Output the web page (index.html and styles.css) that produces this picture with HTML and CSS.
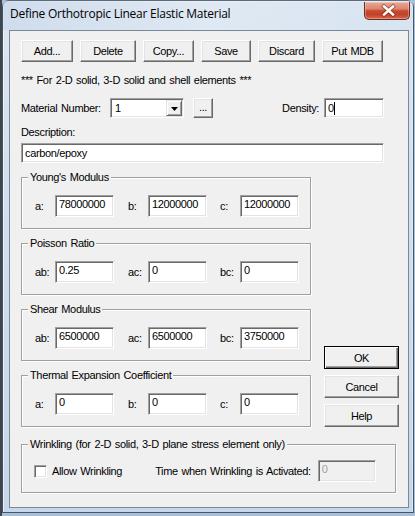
FILE: index.html
```html
<!DOCTYPE html>
<html>
<head>
<meta charset="utf-8">
<title>Define Orthotropic Linear Elastic Material</title>
<link rel="stylesheet" href="styles.css">
</head>
<body>
<div class="window">
  <div class="titlebar">
    <span class="title">Define Orthotropic Linear Elastic Material</span>
    <button class="close" aria-label="Close">
      <svg width="46" height="18" viewBox="0 0 46 18">
        <path d="M19 4.5 L28 12.5 M28 4.5 L19 12.5" stroke="#6a2518" stroke-width="4.2" stroke-linecap="square" opacity="0.55" fill="none"/>
        <path d="M19 4.5 L28 12.5 M28 4.5 L19 12.5" stroke="#ffffff" stroke-width="2.4" stroke-linecap="square" fill="none"/>
      </svg>
    </button>
  </div>
  <div class="client">
    <div class="top">
      <div class="toolbar">
        <button class="btn">Add...</button>
        <button class="btn">Delete</button>
        <button class="btn">Copy...</button>
        <button class="btn">Save</button>
        <button class="btn">Discard</button>
        <button class="btn">Put MDB</button>
      </div>
      <div class="note">*** For 2-D solid, 3-D solid and shell elements ***</div>
      <div class="matrow">
        <span class="mat-label">Material Number:</span>
        <div class="combo">
          <span class="combo-val">1</span>
          <span class="combo-btn">
            <svg width="7" height="4" viewBox="0 0 7 4"><path d="M0 0 H7 L3.5 4 Z" fill="#000"/></svg>
          </span>
        </div>
        <button class="btn dots">...</button>
        <span class="density-label">Density:</span>
        <div class="edit density">0<span class="caret"></span></div>
      </div>
      <div class="desc-label">Description:</div>
      <div class="edit desc">carbon/epoxy</div>
    </div>

    <div class="main">
      <div class="groups">
        <fieldset class="group">
          <legend>Young's Modulus</legend>
          <div class="fields">
            <div class="field"><span class="flabel">a:</span><div class="edit num">78000000</div></div>
            <div class="field"><span class="flabel">b:</span><div class="edit num">12000000</div></div>
            <div class="field"><span class="flabel">c:</span><div class="edit num">12000000</div></div>
          </div>
        </fieldset>
        <fieldset class="group">
          <legend>Poisson Ratio</legend>
          <div class="fields">
            <div class="field"><span class="flabel">ab:</span><div class="edit num">0.25</div></div>
            <div class="field"><span class="flabel">ac:</span><div class="edit num">0</div></div>
            <div class="field"><span class="flabel">bc:</span><div class="edit num">0</div></div>
          </div>
        </fieldset>
        <fieldset class="group">
          <legend>Shear Modulus</legend>
          <div class="fields">
            <div class="field"><span class="flabel">ab:</span><div class="edit num">6500000</div></div>
            <div class="field"><span class="flabel">ac:</span><div class="edit num">6500000</div></div>
            <div class="field"><span class="flabel">bc:</span><div class="edit num">3750000</div></div>
          </div>
        </fieldset>
        <fieldset class="group">
          <legend>Thermal Expansion Coefficient</legend>
          <div class="fields">
            <div class="field"><span class="flabel">a:</span><div class="edit num">0</div></div>
            <div class="field"><span class="flabel">b:</span><div class="edit num">0</div></div>
            <div class="field"><span class="flabel">c:</span><div class="edit num">0</div></div>
          </div>
        </fieldset>
      </div>
      <div class="side">
        <button class="btn side-btn default">OK</button>
        <button class="btn side-btn">Cancel</button>
        <button class="btn side-btn">Help</button>
      </div>
    </div>

    <fieldset class="group wrink">
      <legend>Wrinkling (for 2-D solid, 3-D plane stress element only)</legend>
      <div class="wrow">
        <span class="check"></span>
        <span class="check-label">Allow Wrinkling</span>
        <span class="time-label">Time when Wrinkling is Activated:</span>
        <div class="edit disabled">0</div>
      </div>
    </fieldset>
  </div>
</div>
</body>
</html>
```

FILE: styles.css
```css
* { box-sizing: border-box; }
html, body { margin: 0; padding: 0; }
body {
  width: 415px;
  height: 516px;
  overflow: hidden;
  background: linear-gradient(to right, #3f454c 0, #3f454c 2px, #a9bfd6 2px);
  font-family: "Liberation Sans", Arial, sans-serif;
  font-size: 11px;
  font-weight: normal;
  letter-spacing: -0.35px;
  word-spacing: 1px;
  color: #000;
}
.window {
  margin-left: 2px;
  width: 412px;
  height: 513px;
  border: 1px solid #4a5563;
  border-top-color: #5d6a78;
  border-radius: 7px 7px 0 0;
  background: linear-gradient(180deg, #dbe6f2 0%, #d3e0ee 30%, #c6d7ea 100%);
  box-shadow: inset 1px 1px 0 rgba(255,255,255,0.55), inset -1px 0 0 rgba(255,255,255,0.4);
  display: flex;
  flex-direction: column;
}
.titlebar {
  height: 29px;
  display: flex;
  align-items: flex-start;
  padding-left: 7px;
  background: linear-gradient(90deg, rgba(200,214,232,0.6) 0%, rgba(228,236,245,0.5) 50%, rgba(214,227,241,0.5) 100%);
}
.title {
  font-family: "Open Sans", "Noto Sans", sans-serif;
  font-size: 12px;
  letter-spacing: -0.25px;
  word-spacing: 0;
  line-height: 16px;
  padding-top: 5px;
  color: #000;
}
.close {
  margin-left: auto;
  margin-top: 1px;
  margin-right: 3px;
  width: 46px;
  height: 18px;
  padding: 0;
  border: 1px solid #6e2b20;
  border-top: 0;
  border-radius: 0 0 5px 5px;
  background: linear-gradient(180deg, #e9a895 0%, #dc8670 40%, #c7492f 52%, #c0432b 75%, #d86a4c 100%);
  box-shadow: inset 0 0 0 1px rgba(255,255,255,0.3);
  display: block;
}
.close svg { display: block; }

.client {
  margin: 0 4px 0 6px;
  height: 478px;
  border: 1px solid #7b8899;
  background: #f0f0f0;
  padding: 9px 8px 0 11px;
}
.top { margin-right: 16px; }

.btn {
  font-family: inherit;
  font-size: 11px;
  font-weight: normal;
  letter-spacing: -0.35px;
  word-spacing: 1px;
  color: #000;
  background: #f0f0f0;
  padding: 0;
  border: 1px solid;
  border-color: #fff #696969 #696969 #fff;
  box-shadow: inset -1px -1px 0 #a0a0a0, inset 1px 1px 0 #e3e3e3;
  display: flex;
  align-items: center;
  justify-content: center;
}
.toolbar {
  display: grid;
  grid-template-columns: 52px 56px 51px 50px 57px 61px;
  column-gap: 7px;
  height: 22px;
}
.note {
  margin-top: 12px;
  line-height: 13px;
}
.matrow {
  margin-top: 11px;
  display: flex;
  align-items: center;
  height: 20px;
}
.mat-label { width: 89px; line-height: 13px; }

.edit {
  background: #fff;
  border: 1px solid;
  border-color: #a0a0a0 #fff #fff #a0a0a0;
  box-shadow: inset 1px 1px 0 #696969, inset -1px -1px 0 #e3e3e3;
  line-height: 13px;
  padding: 0 3px;
  white-space: nowrap;
  overflow: hidden;
}
.combo {
  width: 74px;
  height: 20px;
  background: #fff;
  border: 1px solid;
  border-color: #a0a0a0 #fff #fff #a0a0a0;
  box-shadow: inset 1px 1px 0 #696969, inset -1px -1px 0 #e3e3e3;
  display: flex;
  align-items: center;
  padding: 1px 1px 1px 2px;
}
.combo-val { flex: 1; line-height: 13px; padding-left: 2px; }
.combo-btn {
  width: 16px;
  height: 16px;
  background: #f0f0f0;
  border: 1px solid;
  border-color: #e3e3e3 #696969 #696969 #e3e3e3;
  box-shadow: inset 1px 1px 0 #fff, inset -1px -1px 0 #a0a0a0;
  display: flex;
  align-items: center;
  justify-content: center;
}
.combo-btn svg { display: block; margin-top: 1px; }
.dots { width: 20px; height: 20px; margin-left: 9px; padding-bottom: 3px; align-items: center; }
.density-label { margin-left: auto; line-height: 13px; }
.density {
  margin-left: 5px;
  width: 60px;
  height: 20px;
  padding-top: 3px;
  display: flex;
  align-items: flex-start;
}
.caret {
  display: inline-block;
  width: 1px;
  height: 13px;
  background: #000;
}
.desc-label { margin-top: 8px; line-height: 13px; }
.desc { margin-top: 4px; height: 20px; padding-top: 3px; }

.main {
  margin-top: 7px;
  display: flex;
  align-items: flex-end;
  gap: 13px;
}
.groups {
  width: 290px;
  display: flex;
  flex-direction: column;
  gap: 7px;
}
.group {
  margin: 0;
  min-width: 0;
  padding: 11px 0 11px 6px;
  border: 1px solid #a0a0a0;
  box-shadow: 1px 1px 0 #fff, inset 1px 1px 0 #fff;
}
.group legend {
  padding: 0 2px;
  line-height: 14px;
  background: #f0f0f0;
}
.fields {
  display: grid;
  grid-template-columns: 93px 92px auto;
  padding-left: 7px;
}
.field { display: flex; align-items: center; }
.flabel { width: 20px; line-height: 13px; }
.num { width: 59px; height: 22px; padding-top: 2px; }

.side {
  width: 75px;
  display: flex;
  flex-direction: column;
  gap: 6px;
}
.side-btn { width: 75px; height: 23px; }
.side-btn.default {
  border: 1px solid #000;
  box-shadow: inset 1px 1px 0 #fff, inset -1px -1px 0 #696969, inset -2px -2px 0 #a0a0a0;
}

.wrink {
  margin-top: 10px;
  width: 375px;
  padding: 9px 0 10px 6px;
}
.wrow {
  display: flex;
  align-items: center;
  padding-left: 6px;
  height: 22px;
}
.check {
  width: 13px;
  height: 13px;
  background: #fff;
  border: 1px solid;
  border-color: #a0a0a0 #fff #fff #a0a0a0;
  box-shadow: inset 1px 1px 0 #696969, inset -1px -1px 0 #e3e3e3;
}
.check-label { margin-left: 5px; line-height: 13px; }
.time-label { margin-left: 33px; line-height: 13px; }
.disabled {
  margin-left: 7px;
  width: 58px;
  height: 22px;
  padding-top: 2px;
  background: #f0f0f0;
  color: #a0a0a0;
}
```
